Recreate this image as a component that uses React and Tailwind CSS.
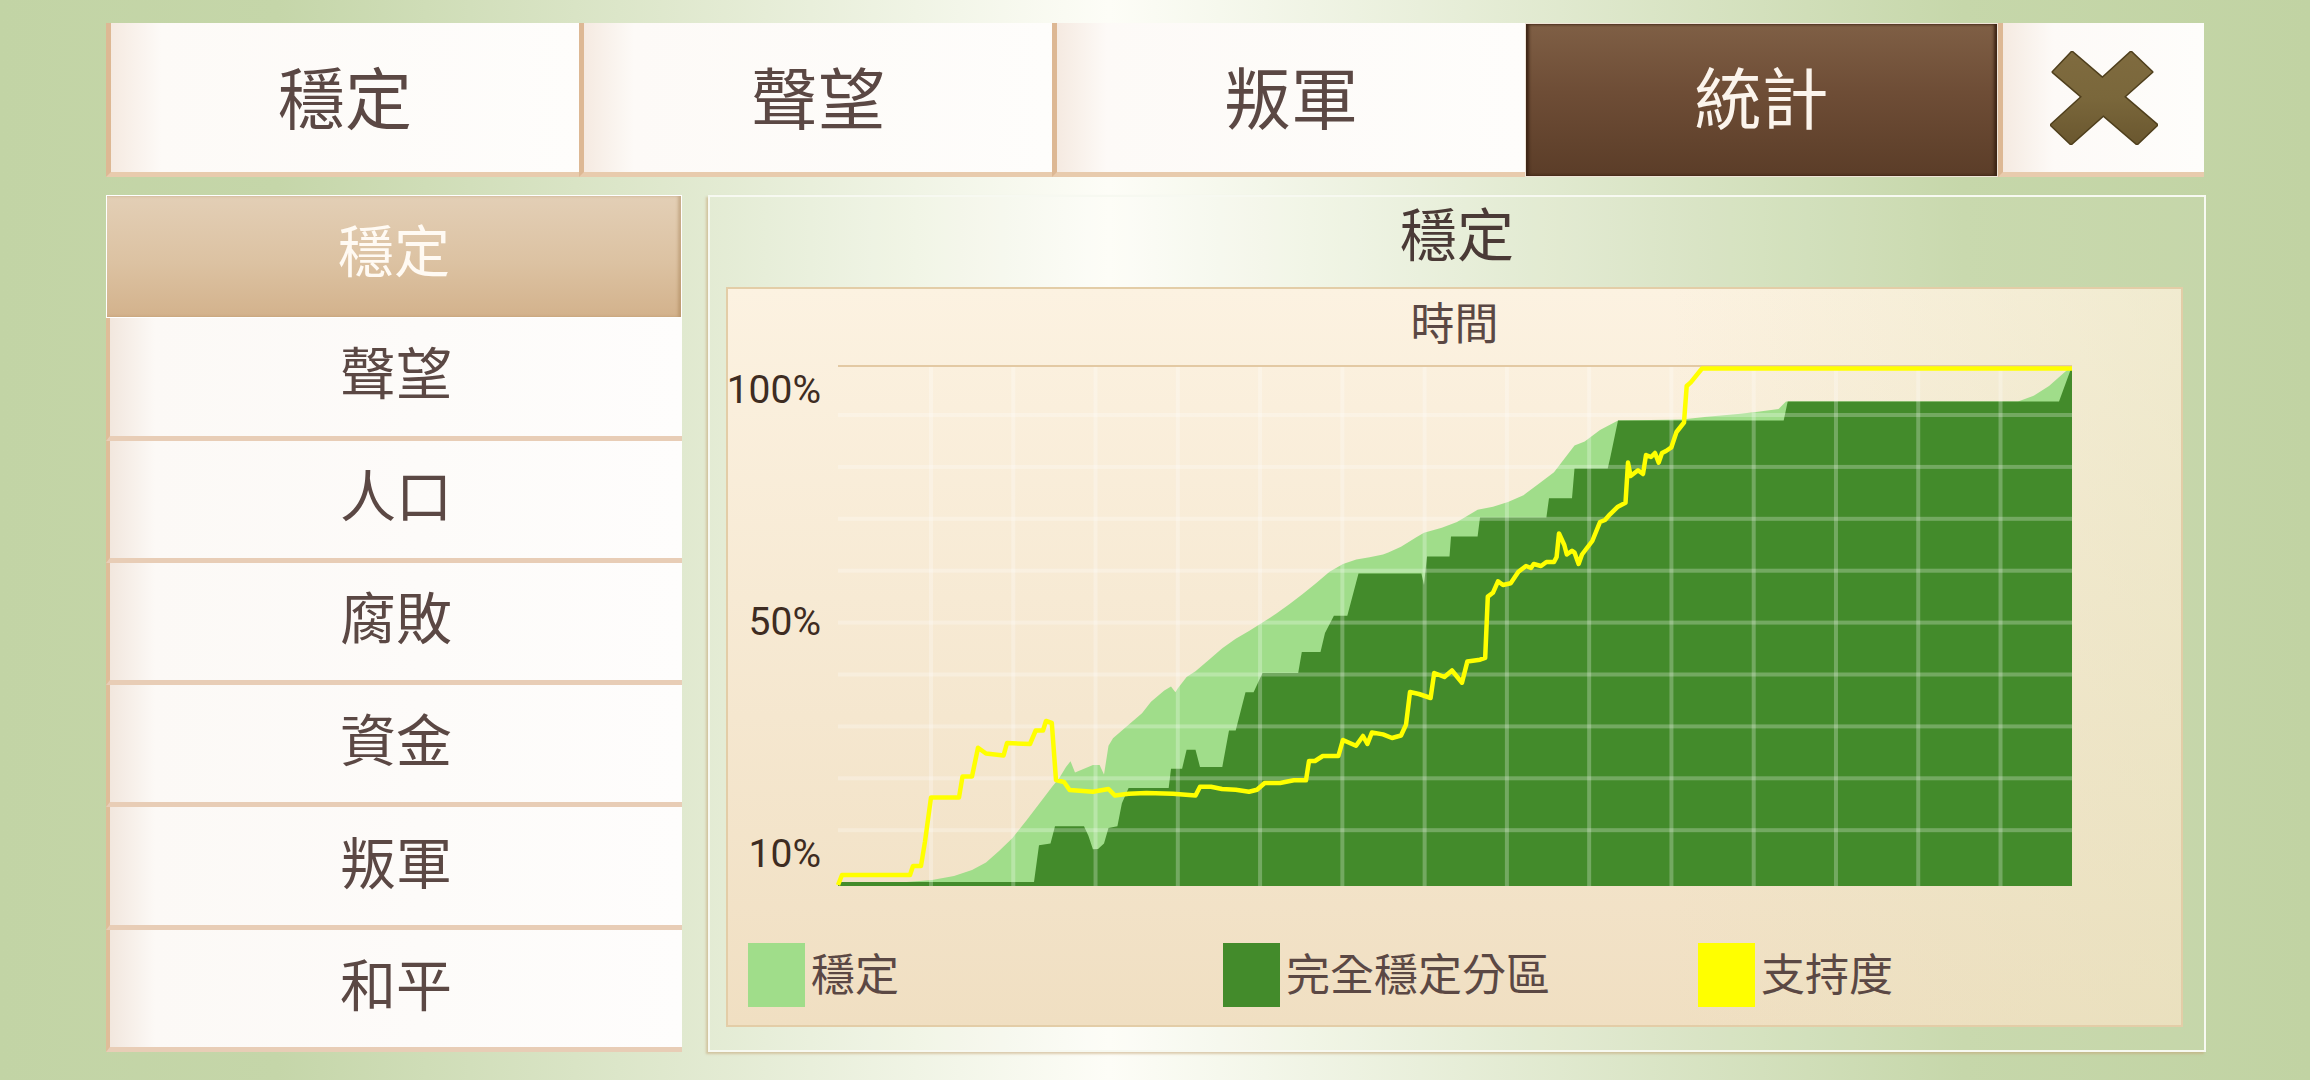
import React from "react";

const tabs = ["穩定", "聲望", "叛軍", "統計"];
const sideItems = ["穩定", "聲望", "人口", "腐敗", "資金", "叛軍", "和平"];

// 圖表資料 (像素座標, 圖表區 1234 x 520)
const lightTop = [
  [0, 519], [62, 516.5], [94, 514], [116, 510], [134, 504], [148, 496.6], [161, 485], [174.5, 472],
  [188, 455], [201, 438], [214.7, 420], [221, 412.5], [228, 401], [232.5, 395.2], [237, 406.6],
  [246, 402.8], [255, 399], [261.6, 399], [266, 408.6], [270.5, 379.8], [275, 372.2], [290.6, 358.8],
  [297.3, 353], [304, 347.3], [313, 335.8], [326.3, 324.4], [333, 320.5], [337.4, 326.3], [339.7, 322.4],
  [348.6, 311], [357.5, 305.2], [371, 293.7], [384.3, 282.3], [397.7, 272.7], [411, 265], [424.5, 256.6],
  [438, 247.8], [451.3, 238.2], [464.7, 227.9], [478, 217.2], [491.5, 205.7], [505, 198], [518.3, 193.5],
  [531.6, 191.2], [545, 188.5], [550.3, 186.6], [563, 180.8], [578.3, 171.3], [586, 166.7], [603.8, 161.7],
  [619, 156], [639.6, 143.7], [655, 140.7], [670, 136], [685.5, 129.2], [700.8, 117.7], [716, 106.2],
  [736.5, 79.4], [746.7, 75.6], [762, 64.1], [780, 54.6], [843.6, 53.4], [869, 50.7], [900, 48],
  [920, 45.7], [940.6, 43], [948, 35.4], [1180, 35.4], [1195.7, 29.7], [1211, 20.1], [1226, 6.7],
  [1234, 0], [1234, 520], [0, 520],
];

const darkTop = [
  [0, 516], [196, 516], [201, 479.3], [212.5, 477.4], [217, 460.2], [246, 460.2], [250.4, 469.8],
  [254.9, 483.2], [260, 483], [266, 477.4], [270.5, 462], [279.4, 460.2], [283.9, 437.3], [290.6, 422],
  [330.7, 422], [333, 402.8], [344.1, 402.8], [348.6, 383.7], [357.5, 383.7], [362, 400.9], [384.3, 400.9],
  [391, 364.5], [397.7, 364.5], [407.5, 326.3], [415.6, 326.3], [424.5, 307.1], [460.2, 307.1],
  [463.8, 286], [482.5, 286], [487, 267], [495.9, 249.7], [509.3, 249.7], [520.5, 207.6], [583.4, 207.6],
  [586, 219], [589, 190.4], [611.5, 190.4], [613, 170.5], [639.6, 170.5], [642, 151.4], [708.4, 151.4],
  [711, 132.2], [734, 132.2], [736.5, 102.4], [769.7, 102.4], [772, 92.8], [780, 54.6], [945.7, 54.6],
  [949.7, 35.4], [1221, 35.4], [1234, 0], [1234, 520], [0, 520],
];

const support = [
  [0, 519], [4, 509], [72, 509], [75, 500], [83, 500], [87, 475.5], [93, 431.5], [121, 431.5],
  [124.5, 410.5], [134, 410.5], [140, 381.7], [148, 387.5], [165.6, 389.4], [169, 377], [192, 378],
  [197.7, 364.5], [205, 364.5], [208, 355], [213.8, 357], [218, 414], [226, 416], [231.6, 424],
  [255, 425.8], [270.5, 423], [277, 429.6], [290.6, 427.7], [308.4, 427], [335, 427.7], [357.5, 429.6],
  [362, 420.8], [373, 420.8], [384, 423], [397.7, 423.8], [411, 425.8], [419, 423.8], [426.7, 417],
  [442, 417], [455.8, 414.3], [468, 414.3], [471, 395], [477, 395], [484.8, 390], [500.4, 390],
  [504.9, 374], [518, 379.8], [525, 370], [529.4, 378], [533.9, 366.5], [545, 368.4], [554, 372],
  [563, 369.5], [568, 358.8], [572, 326], [580.9, 328], [592.6, 332], [596.2, 307], [606.4, 311],
  [614, 304.5], [624, 316.7], [629.3, 295.6], [642, 293.7], [647.2, 291.8], [649.8, 230.6],
  [654.9, 226.8], [660, 215.3], [665, 219], [672.7, 217.2], [680.4, 205.7], [688, 200], [693, 202],
  [695.7, 198], [703, 200], [708.4, 196], [716, 196], [718.6, 191], [721, 167.4], [726.3, 179],
  [728.8, 188.5], [734, 184.7], [736.5, 186.6], [740.6, 198], [744, 188.5], [754.3, 175], [762, 156],
  [767, 154], [772, 148.3], [779.9, 140.7], [787.5, 136.8], [790, 96.6], [792.6, 110], [800, 104.3],
  [805, 108], [808, 89], [813, 91], [817, 87], [820.7, 96.6], [824, 87], [828, 85], [833.4, 81.3],
  [838.5, 66], [846, 56.5], [848.7, 20], [852.8, 16.3], [864, 2.5], [1234, 2.5],
];

const toPath = (pts) => pts.map((p, i) => (i ? "L" : "M") + p[0] + " " + p[1]).join(" ");

const hLines = Array.from({ length: 9 }, (_, k) => 49 + 51.9 * k);
const vLines = Array.from({ length: 14 }, (_, k) => 93 + 82.27 * k);

const Chart = () => (
  <svg width="1234" height="520" viewBox="0 0 1234 520" className="block overflow-visible">
    <path d={toPath(lightTop) + " Z"} fill="#a0dd8a" />
    <path d={toPath(darkTop) + " Z"} fill="#438b2b" />
    {hLines.map((y) => (
      <rect key={"h" + y} x="0" y={y - 2} width="1234" height="4" fill="#ffffff" opacity="0.26" />
    ))}
    {vLines.map((x) => (
      <rect key={"v" + x} x={x - 2} y="0" width="4" height="520" fill="#ffffff" opacity="0.26" />
    ))}
    <rect x="0" y="-1" width="1234" height="2" fill="#e3c9a3" />
    <polyline
      points={support.map((p) => p.join(",")).join(" ")}
      fill="none"
      stroke="#ffff00"
      strokeWidth="4.5"
      strokeLinejoin="round"
    />
  </svg>
);

// X 關閉圖示
const CloseIcon = () => {
  const a = "3,21 22,1 107,74 87,93";
  const b = "81,1 102,21 21,93 1,74";
  return (
    <svg width="108" height="94" viewBox="0 0 108 94">
      <defs>
        <linearGradient id="xg" x1="0" y1="0" x2="0" y2="1">
          <stop offset="0" stopColor="#7f6b3f" />
          <stop offset="0.5" stopColor="#7a673b" />
          <stop offset="1" stopColor="#6a572f" />
        </linearGradient>
      </defs>
      <polygon points={a} fill="#5a4822" stroke="#4f3f1c" strokeWidth="3" strokeLinejoin="round" />
      <polygon points={b} fill="#5a4822" stroke="#4f3f1c" strokeWidth="3" strokeLinejoin="round" />
      <polygon points={a} fill="url(#xg)" />
      <polygon points={b} fill="url(#xg)" />
    </svg>
  );
};

const Tab = ({ label, active }) => {
  if (active) {
    return (
      <div className="flex h-full w-[473px] items-center justify-center border border-[#efe5d8] bg-[linear-gradient(to_bottom,#7f5f45,#6e4d36_45%,#5b3d28)] pb-[11px] text-[67px] leading-none text-[#fbf4ec] shadow-[inset_3px_0_3px_#3e2616,inset_-3px_0_3px_#3e2616]">
        {label}
      </div>
    );
  }
  return (
    <div className="flex h-full w-[473px] items-center justify-center border-b-[5px] border-l-[5px] border-b-[#e8cbad] border-l-[#ddb894] bg-[linear-gradient(to_right,#f5eae1,#fdfaf7_50px,#fefdfb)] pb-[6px] text-[67px] leading-none">
      {label}
    </div>
  );
};

const SideItem = ({ label, active }) => {
  if (active) {
    return (
      <div className="flex flex-1 items-center justify-center border border-white bg-[linear-gradient(to_bottom,#e3cfb6,#dcc2a2_55%,#d3b28c)] pb-[17px] text-[56px] leading-none text-[#fffaf3] shadow-[inset_-3px_0_3px_rgba(150,110,60,0.35)]">
        {label}
      </div>
    );
  }
  return (
    <div className="flex flex-1 items-center justify-center border-b-[5px] border-l-[4px] border-b-[#e8cdb6] border-l-[#dfbd99] bg-[linear-gradient(to_right,#f2e7de,#fcf9f6_45px,#fefdfc)] pb-[13px] text-[56px] leading-none">
      {label}
    </div>
  );
};

const legend = [
  { color: "bg-[#a0dd8a]", label: "穩定" },
  { color: "bg-[#438b2b]", label: "完全穩定分區" },
  { color: "bg-[#ffff00]", label: "支持度" },
];

export default function App() {
  return (
    <div className="h-[1080px] w-[2310px] overflow-hidden bg-[linear-gradient(to_right,#c2d4a5_0%,#c5d6a9_12%,#fdfdf7_48%,#c6d7aa_85%,#c1d3a3_100%)] pl-[106px] pt-[23px] font-['Noto_Sans_CJK_TC','Noto_Sans',sans-serif] text-[#5b4844]">
      {/* 上方分頁 */}
      <div className="flex h-[154px]">
        {tabs.map((t) => (
          <Tab key={t} label={t} active={t === "統計"} />
        ))}
        <div className="flex h-full w-[206px] items-center justify-center border-b-[5px] border-l-[5px] border-b-[#e8cbad] border-l-[#ddb894] bg-[linear-gradient(to_right,#f5eae1,#fdfaf7_50px,#fefdfb)]">
          <CloseIcon />
        </div>
      </div>

      <div className="mt-[18px] flex gap-[26px]">
        {/* 左側選單 */}
        <div className="flex h-[857px] w-[576px] flex-col">
          {sideItems.map((s, i) => (
            <SideItem key={s + i} label={s} active={i === 0} />
          ))}
        </div>

        {/* 主面板 */}
        <div className="flex h-[857px] w-[1498px] flex-col border-2 border-[#f7f9f1] bg-white/5 shadow-[-2px_2px_2px_rgba(196,166,120,0.55)]">
          <div className="h-[90px] pt-[6px] text-center text-[57px] leading-[57px] text-[#4a3a36]">穩定</div>
          <div className="ml-[16px] flex h-[740px] w-[1457px] flex-col border-2 border-[#e3cda7] bg-[linear-gradient(to_right,transparent_65%,rgba(226,226,186,0.45)),linear-gradient(to_bottom,#fcf2e1,#f0dfc2)]">
            <div className="h-[77px] pt-[10px] text-center text-[44px] leading-[44px]">時間</div>
            <div className="flex h-[520px]">
              <div className="flex w-[93px] flex-col items-end gap-[192px] pt-[4px] font-['Roboto',sans-serif] text-[39px] leading-[40px] text-[#3e2c22]">
                <span>100%</span>
                <span>50%</span>
                <span>10%</span>
              </div>
              <div className="ml-[17px] h-[520px] w-[1234px]">
                <Chart />
              </div>
            </div>
            <div className="mt-[57px] flex pl-[20px]">
              {legend.map((l) => (
                <div key={l.label} className="flex w-[475px] items-center">
                  <div className={"h-[64px] w-[57px] " + l.color} />
                  <span className="ml-[6px] pb-[6px] text-[44px] leading-none">{l.label}</span>
                </div>
              ))}
            </div>
          </div>
        </div>
      </div>
    </div>
  );
}
